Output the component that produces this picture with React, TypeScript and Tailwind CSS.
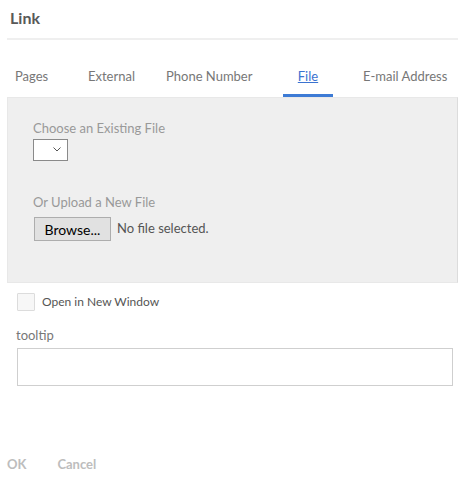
export default function App() {
  const tabs = [
    { label: "Pages", cls: "w-[81px] pl-[8px]" },
    { label: "External", cls: "w-[78px]" },
    { label: "Phone Number", cls: "w-[117px]" },
    { label: "File", cls: "w-[80px]" },
    { label: "E-mail Address", cls: "" },
  ];

  return (
    <div className="w-[465px] h-[481px] bg-white relative font-['Lato','Liberation_Sans',sans-serif] overflow-hidden">
      <div className="px-[7px]">
        <div className="h-[40px] border-b-2 border-[#efefef] flex items-start pt-[6px]">
          <h1 className="pl-[3px] text-[16px] font-bold text-[#595959]">Link</h1>
        </div>

        <div className="flex items-end h-[57px]">
          {tabs.map((t) => {
            const active = t.label === "File";
            return (
              <div key={t.label} className={`${t.cls} shrink-0 flex whitespace-nowrap`}>
                <div
                  className={`text-[13px] pb-[8px] ${
                    active
                      ? "w-[50px] text-center text-[#3b73d0] underline border-b-[3px] border-[#3d7bd5]"
                      : "text-[#777] border-b-[3px] border-transparent"
                  }`}
                >
                  {t.label}
                </div>
              </div>
            );
          })}
        </div>

        <div className="h-[186px] bg-[#efefef] border border-[#e8e8e8] border-r-[#dcdcdc] px-[25px] pt-[21px]">
          <p className="text-[13px] text-[#999]">Choose an Existing File</p>
          <div className="w-[35px] h-[22px] bg-white border border-[#8a8a8a] flex items-center justify-end pr-[6px]">
            <svg width="8" height="5" viewBox="0 0 8 5">
              <path d="M0.5 0.5 L4 4 L7.5 0.5" fill="none" stroke="#555" strokeWidth="1" />
            </svg>
          </div>
          <p className="mt-[32px] text-[13px] text-[#999]">Or Upload a New File</p>
          <div className="mt-[5px] flex items-center">
            <div className="ml-[1px] w-[77px] h-[24px] bg-[#e1e1e1] border border-[#adadad] flex items-center justify-center text-[14px] text-black">
              Browse...
            </div>
            <span className="ml-[6px] text-[13px] text-[#555]">No file selected.</span>
          </div>
        </div>
      </div>

      <div className="pl-[17px] pr-[12px]">
        <div className="mt-[10px] flex items-center">
          <div className="w-[18px] h-[18px] border border-[#dcdcdc] bg-[#f7f7f7] rounded-[1px]" />
          <span className="ml-[7px] text-[12px] text-[#555]">Open in New Window</span>
        </div>
        <p className="mt-[15px] -ml-[1px] text-[13px] text-[#777]">tooltip</p>
        <div className="mt-[2px] h-[38px] border border-[#cfcfcf] bg-white" />
      </div>

      <div className="absolute left-[7px] top-[455px] flex text-[13px] font-bold text-[#bdbdbd]">
        <span>OK</span>
        <span className="ml-[31px]">Cancel</span>
      </div>
    </div>
  );
}
